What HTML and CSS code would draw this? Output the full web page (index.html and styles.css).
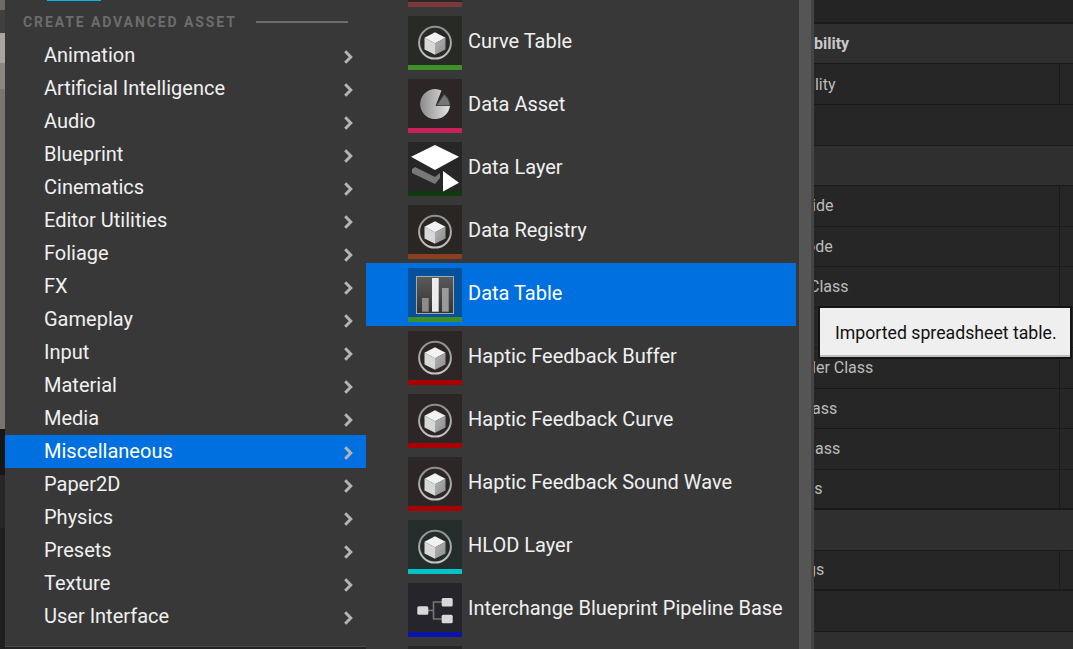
FILE: index.html
```html
<!DOCTYPE html>
<html lang="en">
<head>
<meta charset="UTF-8">
<meta name="viewport" content="width=device-width, initial-scale=1.0">
<title>Create Advanced Asset</title>
<link rel="stylesheet" href="styles.css">
</head>
<body>

<!-- Shared icon shapes -->
<svg class="defs" width="0" height="0">
  <defs>
    <linearGradient id="ringGrad" x1="0" y1="0" x2="0" y2="1">
      <stop offset="0" stop-color="#8e8e8e"/>
      <stop offset="1" stop-color="#c4c4c4"/>
    </linearGradient>
    <linearGradient id="faceGrad" x1="0" y1="0" x2="1" y2="1">
      <stop offset="0" stop-color="#b4b4b4"/>
      <stop offset="1" stop-color="#8c8c8c"/>
    </linearGradient>
    <linearGradient id="pieGrad" x1="0" y1="0" x2="1" y2="0">
      <stop offset="0" stop-color="#8c8c8c"/>
      <stop offset="1" stop-color="#e2e2e2"/>
    </linearGradient>
    <linearGradient id="frameGrad" x1="0" y1="0" x2="0" y2="1">
      <stop offset="0" stop-color="#5a5a5a"/>
      <stop offset="1" stop-color="#333"/>
    </linearGradient>
    <symbol id="cube" viewBox="0 0 54 54">
      <circle cx="27" cy="26.7" r="15.9" fill="none" stroke="url(#ringGrad)" stroke-width="2"/>
      <path d="M27 16.3 37.5 21.8 27 27.3 16.5 21.8Z" fill="#f2f2f2"/>
      <path d="M16.5 21.8 27 27.3V38.7L16.5 33.4Z" fill="#d8d8d8"/>
      <path d="M37.5 21.8 27 27.3V38.7L37.5 33.4Z" fill="url(#faceGrad)"/>
    </symbol>
    <symbol id="pie" viewBox="0 0 54 54">
      <path d="M33.5 11.5A15 15 0 1 0 42 27H27.5Z" fill="url(#pieGrad)"/>
      <path d="M28.5 26.5 36 15.5A15 15 0 0 1 42 26.5Z" fill="#757575" stroke="#4a4a4a"/>
    </symbol>
    <symbol id="layer" viewBox="0 0 54 54">
      <path d="M27 3 51 14.7 27 28 3 14.7Z" fill="#fff"/>
      <path d="M4 27 7 25 27 35 32 31V36L27 42 4 31Z" fill="#787878"/>
      <path d="M35 29 51 40.7 35 49.5Z" fill="#fff"/>
    </symbol>
    <symbol id="table" viewBox="0 0 54 54">
      <rect x="8.5" y="8.5" width="37" height="37" fill="url(#frameGrad)" stroke="#a0a8b0"/>
      <rect x="14" y="30" width="6.7" height="13.7" fill="#8c8c8c"/>
      <rect x="24" y="10" width="6.7" height="33.7" fill="#ececec"/>
      <rect x="34" y="20" width="6.7" height="23.7" fill="#9a9a9a"/>
    </symbol>
    <symbol id="pipeline" viewBox="0 0 54 54">
      <path d="M20 27.5H25.5V19H34M25.5 27.5V36H34" fill="none" stroke="#777" stroke-width="1.6"/>
      <rect x="9.3" y="23.3" width="11" height="8.4" rx="1.5" fill="#d8d8d8"/>
      <rect x="33.7" y="15" width="11" height="8.4" rx="1.5" fill="#d8d8d8"/>
      <rect x="33.7" y="31.7" width="11" height="8.6" rx="1.5" fill="#d8d8d8"/>
    </symbol>
    <symbol id="chevron" viewBox="0 0 10 14">
      <path d="M2.2 1.2 7.8 7 2.2 12.8" fill="none" stroke="#b4b4b4" stroke-width="3"/>
    </symbol>
  </defs>
</svg>

<div class="app">
  <div class="viewport-strip"></div>

  <!-- Category menu -->
  <div class="menu">
    <div class="accent"></div>
    <div class="section-head">
      <span class="section-title">CREATE ADVANCED ASSET</span>
      <span class="section-line"></span>
    </div>
    <div class="cat"><span>Animation</span><svg class="chev"><use href="#chevron"/></svg></div>
    <div class="cat"><span>Artificial Intelligence</span><svg class="chev"><use href="#chevron"/></svg></div>
    <div class="cat"><span>Audio</span><svg class="chev"><use href="#chevron"/></svg></div>
    <div class="cat"><span>Blueprint</span><svg class="chev"><use href="#chevron"/></svg></div>
    <div class="cat"><span>Cinematics</span><svg class="chev"><use href="#chevron"/></svg></div>
    <div class="cat"><span>Editor Utilities</span><svg class="chev"><use href="#chevron"/></svg></div>
    <div class="cat"><span>Foliage</span><svg class="chev"><use href="#chevron"/></svg></div>
    <div class="cat"><span>FX</span><svg class="chev"><use href="#chevron"/></svg></div>
    <div class="cat"><span>Gameplay</span><svg class="chev"><use href="#chevron"/></svg></div>
    <div class="cat"><span>Input</span><svg class="chev"><use href="#chevron"/></svg></div>
    <div class="cat"><span>Material</span><svg class="chev"><use href="#chevron"/></svg></div>
    <div class="cat"><span>Media</span><svg class="chev"><use href="#chevron"/></svg></div>
    <div class="cat active"><span>Miscellaneous</span><svg class="chev"><use href="#chevron"/></svg></div>
    <div class="cat"><span>Paper2D</span><svg class="chev"><use href="#chevron"/></svg></div>
    <div class="cat"><span>Physics</span><svg class="chev"><use href="#chevron"/></svg></div>
    <div class="cat"><span>Presets</span><svg class="chev"><use href="#chevron"/></svg></div>
    <div class="cat"><span>Texture</span><svg class="chev"><use href="#chevron"/></svg></div>
    <div class="cat"><span>User Interface</span><svg class="chev"><use href="#chevron"/></svg></div>
  </div>

  <!-- Asset submenu -->
  <div class="submenu">
    <div class="asset-list">
      <div class="asset">
        <div class="thumb tint-warm"><div class="bar bar-maroon"></div></div>
      </div>
      <div class="asset">
        <div class="thumb tint-green"><svg class="glyph"><use href="#cube"/></svg><div class="bar bar-green"></div></div>
        <span class="asset-name">Curve Table</span>
      </div>
      <div class="asset">
        <div class="thumb tint-rose"><svg class="glyph"><use href="#pie"/></svg><div class="bar bar-pink"></div></div>
        <span class="asset-name">Data Asset</span>
      </div>
      <div class="asset">
        <div class="thumb tint-grey"><svg class="glyph"><use href="#layer"/></svg><div class="bar bar-forest"></div></div>
        <span class="asset-name">Data Layer</span>
      </div>
      <div class="asset">
        <div class="thumb tint-warm"><svg class="glyph"><use href="#cube"/></svg><div class="bar bar-rust"></div></div>
        <span class="asset-name">Data Registry</span>
      </div>
      <div class="asset active">
        <div class="thumb tint-blue"><svg class="glyph"><use href="#table"/></svg><div class="bar bar-green"></div></div>
        <span class="asset-name">Data Table</span>
      </div>
      <div class="asset">
        <div class="thumb tint-rose"><svg class="glyph"><use href="#cube"/></svg><div class="bar bar-red"></div></div>
        <span class="asset-name">Haptic Feedback Buffer</span>
      </div>
      <div class="asset">
        <div class="thumb tint-rose"><svg class="glyph"><use href="#cube"/></svg><div class="bar bar-red"></div></div>
        <span class="asset-name">Haptic Feedback Curve</span>
      </div>
      <div class="asset">
        <div class="thumb tint-rose"><svg class="glyph"><use href="#cube"/></svg><div class="bar bar-red"></div></div>
        <span class="asset-name">Haptic Feedback Sound Wave</span>
      </div>
      <div class="asset">
        <div class="thumb tint-teal"><svg class="glyph"><use href="#cube"/></svg><div class="bar bar-cyan"></div></div>
        <span class="asset-name">HLOD Layer</span>
      </div>
      <div class="asset">
        <div class="thumb tint-navy"><svg class="glyph"><use href="#pipeline"/></svg><div class="bar bar-blue"></div></div>
        <span class="asset-name">Interchange Blueprint Pipeline Base</span>
      </div>
      <div class="asset">
        <div class="thumb tint-grey"></div>
      </div>
    </div>
    <div class="scrollbar">
      <div class="scroll-thumb"></div>
    </div>
  </div>

  <!-- Details panel: only the ends of the labels show past the menus -->
  <div class="details">
    <div class="prop top-row"></div>
    <div class="prop head short"><span class="prop-name">bility</span></div>
    <div class="prop split tall"><span class="prop-name cut-3">ility</span><span class="prop-value"></span></div>
    <div class="prop"></div>
    <div class="prop head"></div>
    <div class="prop split"><span class="prop-name cut-2">ide</span><span class="prop-value"></span></div>
    <div class="prop split"><span class="prop-name cut-8">ode</span><span class="prop-value"></span></div>
    <div class="prop split"><span class="prop-name cut-5">Class</span><span class="prop-value"></span></div>
    <div class="prop split"><span class="prop-name"></span><span class="prop-value"></span></div>
    <div class="prop split"><span class="prop-name cut-2">ler Class</span><span class="prop-value"></span></div>
    <div class="prop split"><span class="prop-name cut-2">ass</span><span class="prop-value"></span></div>
    <div class="prop split"><span class="prop-name push-1">ass</span><span class="prop-value"></span></div>
    <div class="prop split thick"><span class="prop-name cut-8">ss</span><span class="prop-value"></span></div>
    <div class="prop head"></div>
    <div class="prop split thick"><span class="prop-name cut-7">gs</span><span class="prop-value"></span></div>
    <div class="prop"></div>
    <div class="prop head"></div>
  </div>
</div>

<div class="tooltip">Imported spreadsheet table.</div>

</body>
</html>
```

FILE: styles.css
```css
/* Basic reset */
* {
  margin: 0;
  padding: 0;
  box-sizing: border-box;
}

body {
  font-family: Roboto, "Liberation Sans", sans-serif;
  background: #232323;
  width: 1073px;
  height: 649px;
  overflow: hidden;
}

.defs {
  display: block;
  height: 0;
}

.app {
  display: flex;
  height: 649px;
}

/* Bit of the level viewport showing behind the menu */
.viewport-strip {
  width: 5px;
  flex: none;
  background: linear-gradient(to bottom,
    #6f6a63 0, #6f6a63 10px,
    #423f3f 10px, #423f3f 33px,
    #a9a4a0 33px, #a9a4a0 63px,
    #8b8680 63px, #8b8680 89px,
    #7a756f 89px, #7a756f 429px,
    #161616 429px, #161616 475px,
    #262626 475px, #262626 528px,
    #1f1f1f 528px);
}

/* Category menu */
.menu {
  position: relative;
  width: 361px;
  height: 647px;
  flex: none;
  background: #383838;
  border-bottom: 1px solid #4a4a4a;
}

.accent {
  position: absolute;
  top: 0;
  left: 42px;
  width: 54px;
  height: 1px;
  background: #00b8f0;
}

.section-head {
  display: flex;
  align-items: center;
  height: 39px;
  padding: 4px 18px 0 18px;
}

.section-title {
  font-size: 14px;
  font-weight: 700;
  letter-spacing: 1.9px;
  color: #6c6c6c;
  white-space: nowrap;
}

.section-line {
  width: 92px;
  height: 2px;
  margin-left: auto;
  background: #6c6c6c;
}

.cat {
  display: flex;
  align-items: center;
  justify-content: space-between;
  height: 33px;
  padding: 0 13px 0 39px;
  font-size: 20px;
  color: #f0f0f0;
}

.cat span {
  position: relative;
  top: -1px;
}

.cat.active {
  background: #0070e0;
  color: #fff;
}

.chev {
  width: 10px;
  height: 14px;
  margin-top: 2px;
}

/* Asset submenu */
.submenu {
  display: flex;
  width: 448px;
  flex: none;
  background: #383838;
  overflow: hidden;
}

.asset-list {
  width: 430px;
  flex: none;
  margin-top: -52px;
}

.asset {
  display: flex;
  align-items: center;
  gap: 6px;
  height: 63px;
  padding-left: 42px;
  font-size: 20px;
  color: #f0f0f0;
}

.asset.active {
  background: #0070e0;
  color: #fff;
}

.asset-name {
  position: relative;
  top: -2px;
  white-space: nowrap;
}

.thumb {
  display: flex;
  flex-direction: column;
  justify-content: flex-end;
  position: relative;
  width: 54px;
  height: 54px;
  flex: none;
}

.glyph {
  position: absolute;
  top: 0;
  left: 0;
  width: 54px;
  height: 54px;
}

.bar {
  height: 5px;
}

.tint-warm { background: #2a2624; }
.tint-green { background: #282a26; }
.tint-rose { background: #2d2626; }
.tint-grey { background: #272727; }
.tint-blue { background: #05519b; }
.tint-teal { background: #252c2c; }
.tint-navy { background: #25252b; }

.bar-maroon { background: #7a3a3a; }
.bar-green { background: #3f8f29; }
.bar-pink { background: #c9215a; }
.bar-forest { background: #0f3a0f; }
.bar-rust { background: #8a4020; }
.bar-red { background: #aa0000; }
.bar-cyan { background: #00c4c8; }
.bar-blue { background: #0a14aa; }

.scrollbar {
  flex: 1;
  padding-left: 3px;
}

.scroll-thumb {
  height: 100%;
  background: #555;
  border-right: 3px solid #444;
}

/* Details panel */
.details {
  flex: 1;
  min-width: 0;
  overflow: hidden;
}

.prop {
  display: flex;
  align-items: center;
  height: 40.5px;
  background: #262626;
  border-bottom: 1px solid #1a1a1a;
  font-size: 16px;
  color: #bcbcbc;
}

.prop.top-row {
  height: 24px;
  border-bottom-width: 2px;
  background: #242424;
}

.prop.head {
  background: #2f2f2f;
  font-weight: 700;
  color: #c8c8c8;
}

.prop.short {
  height: 40px;
}

.prop.tall {
  height: 41px;
}

.prop.thick {
  border-bottom-width: 2px;
}

.prop-name {
  flex: 1;
  white-space: nowrap;
}

/* Labels run on under the submenu, so each is cut at its own place */
.cut-2 { margin-left: -2px; }
.cut-3 { margin-left: -3px; }
.cut-5 { margin-left: -5px; }
.cut-7 { margin-left: -7px; }
.cut-8 { margin-left: -8px; }
.push-1 { margin-left: 1px; }

.prop-value {
  width: 14px;
  height: 100%;
  flex: none;
  border-left: 1px solid #1a1a1a;
}

/* Hover tooltip over the details panel */
.tooltip {
  position: absolute;
  top: 306px;
  left: 818px;
  width: 254px;
  height: 53px;
  padding-left: 15px;
  line-height: 50px;
  font-size: 17.7px;
  color: #111;
  background: #efefef;
  border: 2px solid #151515;
  box-shadow: inset 0 -2px 0 #bdbdbd;
  white-space: nowrap;
}
```
